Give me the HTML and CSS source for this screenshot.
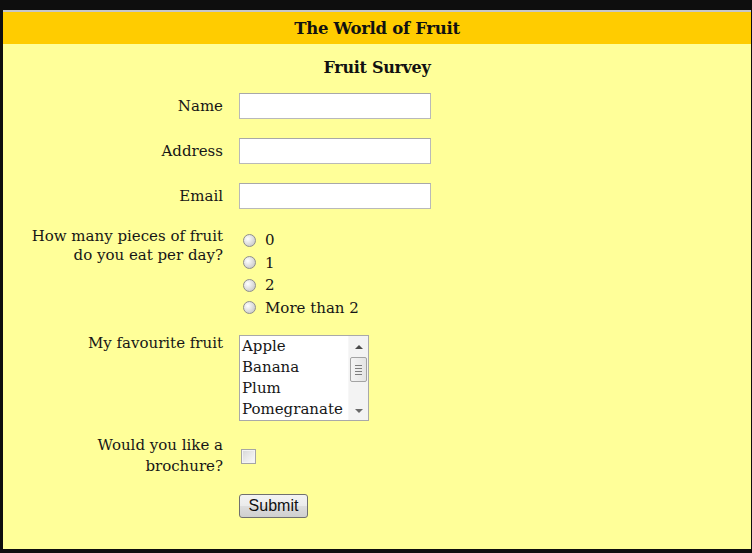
FILE: index.html
```html
<!DOCTYPE html>
<html lang="en">
<head>
<meta charset="utf-8">
<title>The World of Fruit</title>
<link rel="stylesheet" href="styles.css">
</head>
<body>
<div class="page">
  <header class="banner">The World of Fruit</header>
  <main class="content">
    <h1 class="survey-title">Fruit Survey</h1>
    <form class="survey">
      <div class="row row-first">
        <label class="label" for="name">Name</label>
        <input class="text-input" id="name" type="text">
      </div>
      <div class="row row-text">
        <label class="label" for="address">Address</label>
        <input class="text-input" id="address" type="text">
      </div>
      <div class="row row-text">
        <label class="label" for="email">Email</label>
        <input class="text-input" id="email" type="text">
      </div>
      <div class="row row-radios">
        <div class="label label-top">How many pieces of fruit<br>do you eat per day?</div>
        <div class="radio-list">
          <label class="radio-item"><input class="radio" type="radio" name="pieces"><span>0</span></label>
          <label class="radio-item"><input class="radio" type="radio" name="pieces"><span>1</span></label>
          <label class="radio-item"><input class="radio" type="radio" name="pieces"><span>2</span></label>
          <label class="radio-item"><input class="radio" type="radio" name="pieces"><span>More than 2</span></label>
        </div>
      </div>
      <div class="row row-select">
        <div class="label label-top label-select">My favourite fruit</div>
        <div class="listbox" role="listbox">
          <div class="options">
            <div class="option" role="option">Apple</div>
            <div class="option" role="option">Banana</div>
            <div class="option" role="option">Plum</div>
            <div class="option" role="option">Pomegranate</div>
          </div>
          <div class="scrollbar">
            <div class="arrow arrow-up"></div>
            <div class="thumb"><i></i><i></i><i></i><i></i></div>
            <div class="track"></div>
            <div class="arrow arrow-down"></div>
          </div>
        </div>
      </div>
      <div class="row row-check">
        <label class="label label-two" for="brochure">Would you like a<br>brochure?</label>
        <div class="check-cell"><input class="checkbox" id="brochure" type="checkbox"></div>
      </div>
      <div class="row row-submit">
        <div></div>
        <div><button class="submit" type="button">Submit</button></div>
      </div>
    </form>
  </main>
</div>
</body>
</html>
```

FILE: styles.css
```css
* { box-sizing: border-box; }

html, body {
  margin: 0;
  padding: 0;
  height: 553px;
  background: #0e0e0e;
  overflow: hidden;
}

.page {
  margin: 10px 1px 0 3px;
  height: 539px;
  border-top: 2px solid #c6c6c6;
  background: #ffff99;
  font-family: "DejaVu Serif", "Liberation Serif", serif;
  color: #161616;
}

.banner {
  height: 32px;
  padding-top: 1px;
  background: #ffcc00;
  display: flex;
  align-items: center;
  justify-content: center;
  font-weight: bold;
  font-size: 16.5px;
  color: #111;
  letter-spacing: -0.3px;
}

.content {
  padding-top: 12px;
}

.survey-title {
  margin: 0;
  font-size: 16px;
  line-height: 24px;
  text-align: center;
  font-weight: bold;
  color: #111;
  letter-spacing: -0.3px;
}

.survey { margin: 0; }

.row {
  display: grid;
  grid-template-columns: 220px 1fr;
  column-gap: 16px;
  align-items: center;
}

.row-first { margin-top: 13px; }
.row-text { margin-top: 19px; }
.row-radios { margin-top: 20px; align-items: start; }
.row-select { margin-top: 16px; align-items: start; }
.row-check { margin-top: 14px; }
.row-submit { margin-top: 17px; }

.label {
  text-align: right;
  font-size: 15px;
  line-height: 19px;
}

.label-top { margin-top: -2px; line-height: 18.5px; }
.label-select { margin-top: -1px; }
.label-two { line-height: 21px; }

.text-input {
  width: 192px;
  height: 26px;
  margin: 0;
  border: 1px solid #b9b9b9;
  border-top-color: #a8a8a8;
  background: #fff;
  font: 15px "DejaVu Serif", serif;
  padding: 0 3px;
}

.radio-list {
  display: flex;
  flex-direction: column;
}

.radio-item {
  display: flex;
  align-items: center;
  height: 22.5px;
  font-size: 15px;
}

.radio {
  appearance: none;
  -webkit-appearance: none;
  width: 13px;
  height: 13px;
  margin: 0 9px 0 4px;
  border-radius: 50%;
  border: 1px solid #8e8e8e;
  background: radial-gradient(circle at 35% 35%, #ffffff 0%, #e2e2e2 45%, #bdbdbd 100%);
}

.listbox {
  display: flex;
  width: 130px;
  height: 86px;
  border: 1px solid #a9a9a9;
  background: #fff;
}

.options {
  flex: 1;
  padding-left: 2px;
  font-size: 15px;
  line-height: 21px;
  white-space: nowrap;
  overflow: hidden;
}

.scrollbar {
  width: 20px;
  display: flex;
  flex-direction: column;
  background: #f3f3f3;
  border-left: 1px solid #f7f7f7;
}

.arrow {
  height: 21px;
  display: flex;
  align-items: center;
  justify-content: center;
}

.arrow::before {
  content: "";
  width: 0;
  height: 0;
  border-left: 4px solid transparent;
  border-right: 4px solid transparent;
}

.arrow-up::before { border-bottom: 4px solid #4a4a4a; }
.arrow-down { height: 19px; }
.arrow-down::before { border-top: 4px solid #6a6a6a; }

.thumb {
  height: 25px;
  margin: 0 1px;
  border: 1px solid #a3a3a3;
  border-radius: 2px;
  background: linear-gradient(to right, #f4f4f4, #e4e4e4);
  display: flex;
  flex-direction: column;
  align-items: center;
  justify-content: center;
  gap: 2px;
}

.thumb i {
  display: block;
  width: 7px;
  height: 1px;
  background: #7d7d7d;
}

.track { flex: 1; }

.check-cell { display: flex; align-items: center; }

.checkbox {
  appearance: none;
  -webkit-appearance: none;
  width: 15px;
  height: 15px;
  margin: 0 0 0 2px;
  border: 1px solid #a5a5a5;
  background: linear-gradient(135deg, #d6d6d6 0%, #ececec 55%, #fafafa 100%);
  box-shadow: inset 0 0 0 1px #f4f4f4;
}

.submit {
  width: 69px;
  height: 24px;
  margin: 0;
  padding: 0;
  border: 1px solid #707070;
  border-radius: 3px;
  background: linear-gradient(#f3f3f3 0%, #ebebeb 48%, #dddddd 52%, #cfcfcf 100%);
  font-family: "Liberation Sans", Arial, sans-serif;
  font-size: 16px;
  color: #111;
}
```
